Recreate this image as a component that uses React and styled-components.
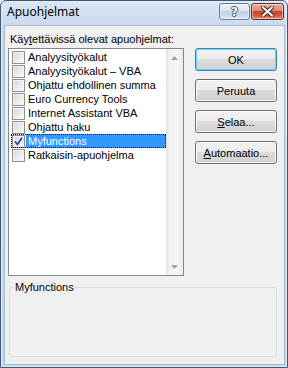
import React from "react";
import styled, { createGlobalStyle } from "styled-components";

const GlobalStyle = createGlobalStyle`
  html, body { margin: 0; padding: 0; background: #ffffff; }
  body { font-family: "Liberation Sans", Arial, sans-serif; }
  * { box-sizing: border-box; }
`;

const Window = styled.div`
  width: 288px;
  height: 368px;
  display: flex;
  flex-direction: column;
  border: 1px solid #3d5877;
  border-radius: 6px 6px 0 0;
  background: linear-gradient(to bottom, #dae6f3 0px, #c9d9ed 26px, #c3d5eb 100%);
  box-shadow: inset 0 0 0 1px #e6eff9;
  overflow: hidden;
`;

const TitleBar = styled.div`
  height: 25px;
  flex: none;
  display: flex;
  align-items: flex-start;
  padding: 2px 3px 0 6px;
`;

const Title = styled.div`
  flex: 1;
  margin-top: 1px;
  font-family: "Noto Sans", "Open Sans", sans-serif;
  font-size: 12px;
  line-height: 16px;
  color: #000;
`;

const CaptionButton = styled.div`
  width: ${(p) => p.$w}px;
  height: 17px;
  border: 1px solid ${(p) => (p.$close ? "#6e2a20" : "#6b7b92")};
  border-radius: 3px;
  background: ${(p) =>
    p.$close
      ? "linear-gradient(to bottom, #eab0a2 0%, #d98a76 45%, #c5472e 50%, #d0553a 75%, #e0906f 100%)"
      : "linear-gradient(to bottom, #eef3f9 0%, #dbe4ef 45%, #c2d0e3 50%, #cbd9ea 80%, #dce7f3 100%)"};
  box-shadow: inset 0 0 0 1px rgba(255, 255, 255, 0.45);
  display: flex;
  align-items: center;
  justify-content: center;
  margin-left: ${(p) => (p.$close ? "1px" : "0")};
`;

const HelpGlyph = styled.span`
  font-family: "DejaVu Sans", sans-serif;
  font-weight: bold;
  font-size: 12px;
  line-height: 12px;
  color: #fff;
  text-shadow: 1px 0 0 #4a5566, -1px 0 0 #4a5566, 0 1px 0 #4a5566, 0 -1px 0 #4a5566;
`;

const Client = styled.div`
  flex: 1;
  margin: 0 3px 3px 4px;
  background: #f0f0f0;
  box-shadow: 0 0 0 1px #a9bcd3;
  padding: 7px 7px 7px 3px;
  display: flex;
  flex-direction: column;
  font-size: 11px;
  color: #000;
`;

const Label = styled.div`
  height: 13px;
  line-height: 13px;
  margin: 0 0 2px 2px;
  white-space: nowrap;
`;

const Key = styled.span`
  text-decoration: underline;
`;

const Main = styled.div`
  display: flex;
  gap: 11px;
  height: 228px;
  flex: none;
`;

const ListBox = styled.div`
  width: 176px;
  height: 228px;
  border: 1px solid #828790;
  background: #fff;
  display: flex;
`;

const Items = styled.div`
  flex: 1;
  padding: 1px 0 0 2px;
  display: flex;
  flex-direction: column;
`;

const Row = styled.div`
  height: 14px;
  display: flex;
  align-items: center;
  outline: ${(p) => (p.$focus ? "1px dotted #000" : "none")};
  outline-offset: -1px;
`;

const Box = styled.span`
  width: 13px;
  height: 13px;
  margin-left: 1px;
  flex: none;
  border: 1px solid #8e8f8f;
  background: linear-gradient(135deg, #d2d4d8 0%, #e9eaec 50%, #fbfbfb 100%);
  box-shadow: inset 0 0 0 1px #f4f4f4;
  display: flex;
  align-items: center;
  justify-content: center;
`;

const ItemText = styled.span`
  flex: 1;
  height: 14px;
  line-height: 14px;
  margin-left: 1px;
  padding: 0 2px;
  white-space: nowrap;
  background: ${(p) => (p.$selected ? "#3399ff" : "transparent")};
  color: ${(p) => (p.$selected ? "#fff" : "#000")};
`;

const ScrollBar = styled.div`
  width: 17px;
  flex: none;
  display: flex;
  flex-direction: column;
  justify-content: space-between;
  background: linear-gradient(to right, #e4e4e4 0%, #f2f2f2 25%, #f4f4f4 70%, #e9e9e9 100%);
`;

const ArrowButton = styled.div`
  width: 17px;
  height: 17px;
  display: flex;
  align-items: center;
  justify-content: center;
`;

const Buttons = styled.div`
  width: 82px;
  display: flex;
  flex-direction: column;
  gap: 8px;
`;

const Button = styled.button`
  width: 82px;
  height: 23px;
  padding: 0;
  font-family: "Liberation Sans", Arial, sans-serif;
  font-size: 11px;
  color: #000;
  border: 1px solid ${(p) => (p.$default ? "#3c7fb1" : "#707070")};
  border-radius: 3px;
  background: linear-gradient(to bottom, #f2f2f2 0%, #ebebeb 49%, #dddddd 50%, #cfcfcf 100%);
  box-shadow: inset 0 0 0 1px ${(p) => (p.$default ? "#6fd3f7" : "#fbfbfb")};
`;

const GroupBox = styled.fieldset`
  flex: 1;
  margin: 5px 0 0 1px;
  padding: 0;
  border: 1px solid #d5dfe5;
  border-radius: 3px;
  min-width: 0;
`;

const Legend = styled.legend`
  margin-left: 4px;
  padding: 0 1px;
  font-size: 11px;
  line-height: 12px;
`;

const items = [
  "Analyysityökalut",
  "Analyysityökalut – VBA",
  "Ohjattu ehdollinen summa",
  "Euro Currency Tools",
  "Internet Assistant VBA",
  "Ohjattu haku",
  "Myfunctions",
  "Ratkaisin-apuohjelma",
];

export default function App() {
  return (
    <>
      <GlobalStyle />
      <Window>
        <TitleBar>
          <Title>Apuohjelmat</Title>
          <CaptionButton $w={31}>
            <HelpGlyph>?</HelpGlyph>
          </CaptionButton>
          <CaptionButton $w={33} $close>
            <svg width="13" height="11" viewBox="0 0 13 11">
              <path d="M2 1.5 L11 9.5 M11 1.5 L2 9.5" stroke="#4a2620" strokeWidth="4" strokeLinecap="square" />
              <path d="M2 1.5 L11 9.5 M11 1.5 L2 9.5" stroke="#ffffff" strokeWidth="2" strokeLinecap="square" />
            </svg>
          </CaptionButton>
        </TitleBar>
        <Client>
          <Label>
            Käy<Key>t</Key>ettävissä olevat apuohjelmat:
          </Label>
          <Main>
            <ListBox>
              <Items>
                {items.map((name) => {
                  const sel = name === "Myfunctions";
                  return (
                    <Row key={name} $focus={sel}>
                      <Box>
                        {sel && (
                          <svg width="9" height="9" viewBox="0 0 9 9">
                            <path d="M1 4.5 L3.5 7.5 L8 0.8" fill="none" stroke="#253f8a" strokeWidth="1.6" />
                          </svg>
                        )}
                      </Box>
                      <ItemText $selected={sel}>{name}</ItemText>
                    </Row>
                  );
                })}
              </Items>
              <ScrollBar>
                <ArrowButton>
                  <svg width="7" height="4" viewBox="0 0 7 4">
                    <path d="M0 4 L3.5 0 L7 4 Z" fill="#a3a3a3" />
                  </svg>
                </ArrowButton>
                <ArrowButton>
                  <svg width="7" height="4" viewBox="0 0 7 4">
                    <path d="M0 0 L7 0 L3.5 4 Z" fill="#a3a3a3" />
                  </svg>
                </ArrowButton>
              </ScrollBar>
            </ListBox>
            <Buttons>
              <Button $default>OK</Button>
              <Button>Peruuta</Button>
              <Button>
                <Key>S</Key>elaa...
              </Button>
              <Button>
                <Key>A</Key>utomaatio...
              </Button>
            </Buttons>
          </Main>
          <GroupBox>
            <Legend>Myfunctions</Legend>
          </GroupBox>
        </Client>
      </Window>
    </>
  );
}
